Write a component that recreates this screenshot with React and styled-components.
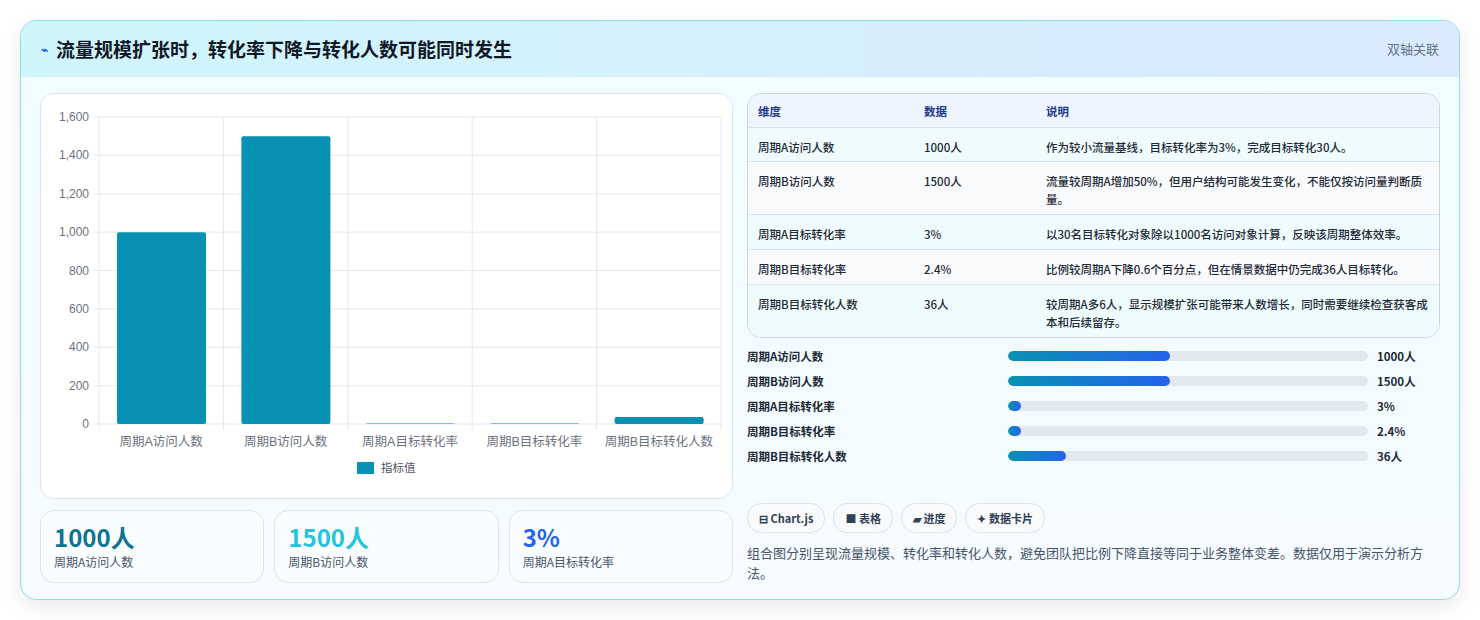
import React from "react";
import styled, { createGlobalStyle } from "styled-components";

const G = createGlobalStyle`
  body{margin:0;background:#fff;font-family:"Noto Sans CJK SC","Noto Sans",sans-serif;}
`;
const Page = styled.div`padding:20px;`;
const Card = styled.div`
  width:1440px;height:580px;box-sizing:border-box;border:1px solid #8fdde6;border-radius:16px;overflow:hidden;
  background:linear-gradient(180deg,#f0fdff 0%,#f6fbff 100%);box-shadow:0 8px 20px rgba(0,0,0,.08);
`;
const Header = styled.div`
  height:55px;display:flex;align-items:center;justify-content:space-between;padding:0 20px;
  background:linear-gradient(90deg,#cff6fb,#dbeafe);border-bottom:1px solid #d3eef4;
`;
const Title = styled.h1`margin:0;font-size:19px;font-weight:700;color:#111827;display:flex;align-items:center;gap:8px;`;
const Tag = styled.span`font-size:13px;color:#64748b;`;
const Body = styled.div`display:grid;grid-template-columns:693px 693px;gap:14px;padding:16px 19px 0;`;
const Col = styled.div`display:flex;flex-direction:column;`;
const Panel = styled.div`height:404px;border:1px solid #dbe3ee;border-radius:14px;background:#fff;overflow:hidden;`;
const Kpis = styled.div`display:grid;grid-template-columns:repeat(3,1fr);gap:10px;margin-top:11px;`;
const Kpi = styled.div`height:73px;box-sizing:border-box;border:1px solid #dbe3ee;border-radius:14px;background:#fafdff;padding:10px 13px;`;
const KVal = styled.div`font-size:24px;font-weight:700;color:${p=>p.c};line-height:32px;`;
const KLab = styled.div`font-size:12px;color:#475569;`;
const Table = styled.div`border:1px solid #cbd5e1;border-radius:14px;overflow:hidden;background:#f8fbff;`;
const Row = styled.div`
  display:grid;grid-template-columns:166px 122px 1fr;padding:0 10px;min-height:${p=>p.h}px;box-sizing:border-box;
  align-items:start;padding-top:${p=>p.head?8:10}px;font-size:11.5px;line-height:18px;
  color:${p=>p.head?"#1e3a8a":"#1f2937"};font-weight:${p=>p.head?600:500};
  background:${p=>p.head?"#eef5ff":p.alt?"#f8fafc":"#effcfd"};
  border-top:${p=>p.head?"none":"1px solid #dbe3ee"};
`;
const Bars = styled.div`display:flex;flex-direction:column;gap:7px;margin-top:9px;`;
const BarRow = styled.div`display:grid;grid-template-columns:261px 360px 1fr;align-items:center;height:18px;font-size:11.5px;font-weight:700;color:#1f2937;`;
const Track = styled.div`height:10px;border-radius:5px;background:#e2e8f0;overflow:hidden;`;
const Fill = styled.div`height:100%;border-radius:5px;background:linear-gradient(90deg,#0891b2,#2563eb);`;
const Val = styled.span`padding-left:9px;`;
const Chips = styled.div`display:flex;gap:8px;margin-top:38px;`;
const Chip = styled.span`height:28px;padding:0 11px;border:1px solid #dbe3ee;border-radius:14px;background:#f8fafc;display:flex;align-items:center;gap:3px;font-size:11px;font-weight:700;color:#334155;`;
const Note = styled.p`margin:10px 0 0;font-size:13px;line-height:20px;color:#475569;`;

const cats=["周期A访问人数","周期B访问人数","周期A目标转化率","周期B目标转化率","周期B目标转化人数"];
const vals=[1000,1500,3,2.4,36];
function Chart(){
  const x0=58,x1=680,y0=330,k=307/1600,w=(x1-x0)/5;
  return (
    <svg width="693" height="404" style={{display:"block"}} fontFamily="Liberation Sans, Noto Sans CJK SC, sans-serif">
      {[0,200,400,600,800,1000,1200,1400,1600].map(v=>{const y=y0-v*k;return <g key={v}>
        <line x1={x0-6} x2={x1} y1={y} y2={y} stroke="#e5e7eb"/>
        <text x={x0-10} y={y+4} textAnchor="end" fontSize="12" fill="#6b7280">{v.toLocaleString("en-US")}</text></g>;})}
      {[0,1,2,3,4,5].map(i=><line key={i} x1={x0+i*w} x2={x0+i*w} y1={y0-307} y2={y0+6} stroke="#e5e7eb"/>)}
      {vals.map((v,i)=>{const h=Math.max(v*k,0.5);return <rect key={i} x={x0+i*w+18} y={y0-h} width={89} height={h} rx="2" fill="#0891b2"/>;})}
      {cats.map((c,i)=><text key={c} x={x0+i*w+w/2} y={y0+22} textAnchor="middle" fontSize="12.5" fill="#6b7280">{c}</text>)}
      <rect x="316" y="368" width="17" height="12" fill="#0891b2"/>
      <text x="340" y="378" fontSize="11.5" fill="#4b5563">指标值</text>
    </svg>
  );
}

const rows=[
  ["周期A访问人数","1000人","作为较小流量基线，目标转化率为3%，完成目标转化30人。",34],
  ["周期B访问人数","1500人","流量较周期A增加50%，但用户结构可能发生变化，不能仅按访问量判断质量。",53],
  ["周期A目标转化率","3%","以30名目标转化对象除以1000名访问对象计算，反映该周期整体效率。",35],
  ["周期B目标转化率","2.4%","比例较周期A下降0.6个百分点，但在情景数据中仍完成36人目标转化。",35],
  ["周期B目标转化人数","36人","较周期A多6人，显示规模扩张可能带来人数增长，同时需要继续检查获客成本和后续留存。",53],
];
const bars=[["周期A访问人数",45,"1000人"],["周期B访问人数",45,"1500人"],["周期A目标转化率",3.6,"3%"],["周期B目标转化率",3.6,"2.4%"],["周期B目标转化人数",16,"36人"]];

export default function App(){
  return <Page><G/>
    <Card>
      <Header>
        <Title><span style={{color:"#2563eb",fontSize:12}}>⌁</span>流量规模扩张时，转化率下降与转化人数可能同时发生</Title>
        <Tag>双轴关联</Tag>
      </Header>
      <Body>
        <Col>
          <Panel><Chart/></Panel>
          <Kpis>
            <Kpi><KVal c="#0e7490">1000人</KVal><KLab>周期A访问人数</KLab></Kpi>
            <Kpi><KVal c="#22c5dd">1500人</KVal><KLab>周期B访问人数</KLab></Kpi>
            <Kpi><KVal c="#2563eb">3%</KVal><KLab>周期A目标转化率</KLab></Kpi>
          </Kpis>
        </Col>
        <Col>
          <Table>
            <Row head h={33}><span>维度</span><span>数据</span><span>说明</span></Row>
            {rows.map((r,i)=><Row key={i} h={r[3]} alt={i%2===1}><span>{r[0]}</span><span>{r[1]}</span><span>{r[2]}</span></Row>)}
          </Table>
          <Bars>
            {bars.map(b=><BarRow key={b[0]}><span>{b[0]}</span><Track><Fill style={{width:b[1]+"%"}}/></Track><Val>{b[2]}</Val></BarRow>)}
          </Bars>
          <Chips>
            <Chip>⊟ Chart.js</Chip><Chip>■ 表格</Chip><Chip>▰ 进度</Chip><Chip>✦ 数据卡片</Chip>
          </Chips>
          <Note>组合图分别呈现流量规模、转化率和转化人数，避免团队把比例下降直接等同于业务整体变差。数据仅用于演示分析方法。</Note>
        </Col>
      </Body>
    </Card>
  </Page>;
}
